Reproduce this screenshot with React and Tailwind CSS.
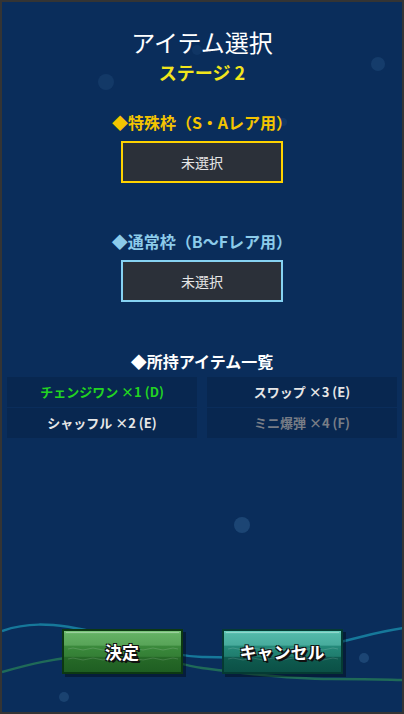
const items = [
  { label: "チェンジワン ×1 (D)", tone: "text-[#22d422]" },
  { label: "スワップ ×3 (E)", tone: "text-[#e6e6e6]" },
  { label: "シャッフル ×2 (E)", tone: "text-[#e6e6e6]" },
  { label: "ミニ爆弾 ×4 (F)", tone: "text-[#787d86]" },
];

const bubbles = [
  { cx: 104, cy: 80, r: 8, o: 0.35 },
  { cx: 376, cy: 62, r: 7, o: 0.45 },
  { cx: 195, cy: 48, r: 5, o: 0.25 },
  { cx: 281, cy: 120, r: 4, o: 0.3 },
  { cx: 197, cy: 294, r: 4, o: 0.35 },
  { cx: 240, cy: 523, r: 8, o: 0.7 },
  { cx: 362, cy: 656, r: 5, o: 0.7 },
  { cx: 62, cy: 695, r: 5, o: 0.6 },
];

const Background = () => (
  <svg className="absolute inset-0 h-full w-full" viewBox="0 0 400 710" fill="none">
    {bubbles.map((b, i) => (
      <circle key={i} cx={b.cx} cy={b.cy} r={b.r} fill="#24507f" opacity={b.o} />
    ))}
    <path
      d="M0 629 C 20 622, 45 618, 100 632 S 170 654, 200 655 S 250 657, 300 648 S 370 630, 402 626"
      stroke="#16789a"
      strokeWidth="2.5"
    />
    <path
      d="M0 670 C 25 663, 50 656, 100 652 S 170 662, 200 666 S 280 677, 330 677 S 390 678, 402 678"
      stroke="#1f6a58"
      strokeWidth="2.5"
    />
  </svg>
);

const ButtonWaves = () => (
  <svg className="absolute inset-0 h-full w-full" viewBox="0 0 117 41" preserveAspectRatio="none" fill="none">
    <path d="M4 18 q 5 -2 10 0 t 10 0 t 10 0 t 10 0 t 10 0 t 10 0 t 10 0 t 10 0 t 10 0 t 10 0 t 10 0" stroke="#ffffff" strokeOpacity="0.18" strokeWidth="0.8" />
    <path d="M4 28 q 5 -2 10 0 t 10 0 t 10 0 t 10 0 t 10 0 t 10 0 t 10 0 t 10 0 t 10 0 t 10 0 t 10 0" stroke="#ffffff" strokeOpacity="0.18" strokeWidth="0.8" />
  </svg>
);

const GameButton = ({ children, variant }) => {
  const skin =
    variant === "green"
      ? "border-[#0c3812] bg-[linear-gradient(to_bottom,#7cc57c_0%,#63b063_8%,#58a458_35%,#3b8a3c_36%,#347f35_62%,#266a28_63%,#1f5e22_100%)]"
      : "border-[#053a33] bg-[linear-gradient(to_bottom,#6dd0c0_0%,#52b8a8_8%,#47ab9c_35%,#258a7a_36%,#1f7d6e_62%,#0f5c50_63%,#0b5046_100%)]";
  return (
    <button
      className={`relative flex h-[45px] w-[121px] items-center justify-center border-2 ${skin} shadow-[3px_3px_0_rgba(0,0,0,0.35)]`}
    >
      <span className="pointer-events-none absolute inset-x-[2px] top-[1px] h-[1px] bg-white/30" />
      <ButtonWaves />
      <span className="relative text-[17px] font-bold leading-none text-white [text-shadow:1px_1px_0_#111,-1px_1px_0_#111,1px_-1px_0_#111,-1px_-1px_0_#111,2px_2px_0_#111]">
        {children}
      </span>
    </button>
  );
};

const SlotBox = ({ border }) => (
  <div className={`mt-[9px] flex h-[42px] w-[162px] items-center justify-center border-2 ${border} bg-[#2b3039]`}>
    <span className="text-[14px] text-[#e6e6e6]">未選択</span>
  </div>
);

export default function App() {
  return (
    <div className="relative h-[714px] w-[404px] overflow-hidden border-2 border-[#343434] bg-[#0a2d5b] font-['Noto_Sans_CJK_JP','Noto_Sans',sans-serif]">
      <Background />
      <div className="relative flex h-full flex-col items-center">
        <h1 className="mt-[26px] text-[24px] leading-[28px] text-white">アイテム選択</h1>
        <p className="mt-[4px] text-[18px] font-bold leading-[24px] text-[#f2e51c]">ステージ 2</p>

        <h2 className="mt-[28px] text-[16px] font-bold leading-[20px] text-[#f5c400]">◆特殊枠（S・Aレア用）</h2>
        <SlotBox border="border-[#ffd200]" />

        <h2 className="mt-[48px] text-[16px] font-bold leading-[20px] text-[#8ccbea]">◆通常枠（B〜Fレア用）</h2>
        <SlotBox border="border-[#86d2f2]" />

        <h2 className="mt-[49px] text-[16px] font-bold leading-[20px] text-white">◆所持アイテム一覧</h2>
        <div className="mt-[6px] grid w-full grid-cols-2 gap-x-[10px] gap-y-[1px] px-[5px]">
          {items.map((it) => (
            <div key={it.label} className="flex h-[30px] items-center justify-center bg-[#082750]">
              <span className={`text-[13px] font-bold ${it.tone}`}>{it.label}</span>
            </div>
          ))}
        </div>

        <div className="mt-auto mb-[38px] flex gap-[39px]">
          <GameButton variant="green">決定</GameButton>
          <GameButton variant="teal">キャンセル</GameButton>
        </div>
      </div>
    </div>
  );
}
